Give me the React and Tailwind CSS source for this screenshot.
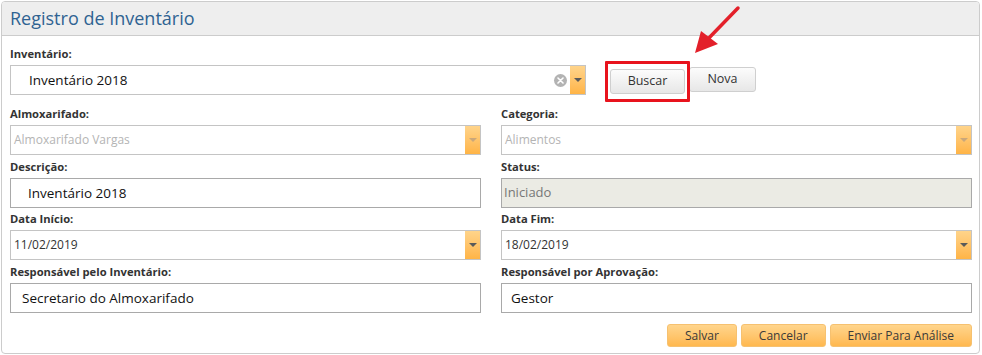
import React from 'react';

const font = { fontFamily: '"Open Sans", "Noto Sans", sans-serif' };

const DropButton = ({ disabled }) => (
  <div className="w-[15px] self-stretch bg-gradient-to-b from-[#ffd48a] to-[#ffb445] flex items-center justify-center">
    <div
      className={`w-0 h-0 border-l-[4px] border-r-[4px] border-t-[4px] border-l-transparent border-r-transparent ${
        disabled ? 'border-t-[#caa77a]' : 'border-t-[#5a5a5a]'
      }`}
    />
  </div>
);

const Combo = ({ value, disabled, big, clear, className = '' }) => (
  <div className={`h-[30px] flex border border-[#c4c4c4] bg-white ${className}`}>
    <div
      className={`flex-1 flex items-center ${
        big ? 'pl-[18px] text-[13.5px] text-[#111]' : 'pl-[3px] text-[12px]'
      } ${disabled ? 'text-[#b4b4b4]' : big ? '' : 'text-[#333]'}`}
    >
      {value}
    </div>
    {clear && (
      <div className="flex items-center pr-[3px]">
        <div className="w-[13px] h-[13px] rounded-full bg-[#b3b3b3] flex items-center justify-center">
          <svg width="7" height="7" viewBox="0 0 7 7">
            <path d="M1 1 L6 6 M6 1 L1 6" stroke="#fff" strokeWidth="1.6" strokeLinecap="round" />
          </svg>
        </div>
      </div>
    )}
    <DropButton disabled={disabled} />
  </div>
);

const TextBox = ({ value, pad = 'pl-[17px]' }) => (
  <div className={`h-[30px] flex items-center border border-[#a9a9a9] bg-white ${pad} text-[13.5px] text-[#111]`}>
    {value}
  </div>
);

const Label = ({ children }) => (
  <div className="h-[16px] mb-[3px] text-[11.2px] leading-[16px] font-bold text-[#333]">{children}</div>
);

const Field = ({ label, children }) => (
  <div>
    <Label>{label}</Label>
    {children}
  </div>
);

const GrayButton = ({ children, className = '' }) => (
  <button className={`h-[25px] rounded-[3px] border border-[#cfcfcf] bg-gradient-to-b from-[#fcfcfc] to-[#e7e7e7] text-[12.5px] text-[#333] ${className}`}>
    {children}
  </button>
);

const OrangeButton = ({ children }) => (
  <button className="h-[23px] px-[17px] rounded-[3px] border border-[#f6c170] bg-gradient-to-b from-[#ffd58c] to-[#ffb84e] text-[12px] text-[#3a3a3a]">
    {children}
  </button>
);

export default function App() {
  return (
    <div className="relative w-[982px] h-[355px] bg-white overflow-hidden" style={font}>
      <div className="ml-[1px] mt-[1px] w-[979px] h-[353px] border border-[#cccccc] rounded-[4px] overflow-hidden">
        <div className="h-[34px] bg-[#eeeeee] border-b border-[#cccccc] flex items-center pl-[8px]">
          <h1 className="text-[18px] text-[#2f6392] font-normal">Registro de Inventário</h1>
        </div>

        <div className="pl-[8px] pr-[7px] pt-[10px]">
          {/* Inventário + ações */}
          <div className="flex">
            <Field label="Inventário:">
              <Combo value="Inventário 2018" big clear className="w-[576px]" />
            </Field>
            <div className="flex gap-[4px] pt-[21px] ml-[24px]">
              <div className="relative">
                <GrayButton className="w-[75px]">Buscar</GrayButton>
                <div className="absolute -left-[5px] -right-[5px] -top-[6px] -bottom-[7px] border-[3px] border-[#e8131d] rounded-[1px]" />
              </div>
              <GrayButton className="w-[67px]">Nova</GrayButton>
            </div>
          </div>

          <div className="grid grid-cols-2 gap-x-[20px] mt-[11px]">
            <Field label="Almoxarifado:">
              <Combo value="Almoxarifado Vargas" disabled />
            </Field>
            <Field label="Categoria:">
              <Combo value="Alimentos" disabled />
            </Field>
          </div>

          <div className="grid grid-cols-2 gap-x-[20px] mt-[4px]">
            <Field label="Descrição:">
              <TextBox value="Inventário 2018" />
            </Field>
            <Field label="Status:">
              <div className="h-[30px] flex items-center border border-[#a9a9a9] bg-[#ebebe4] pl-[2px] text-[13px] text-[#777]">
                Iniciado
              </div>
            </Field>
          </div>

          <div className="grid grid-cols-2 gap-x-[20px] mt-[3px]">
            <Field label="Data Início:">
              <Combo value="11/02/2019" />
            </Field>
            <Field label="Data Fim:">
              <Combo value="18/02/2019" />
            </Field>
          </div>

          <div className="grid grid-cols-2 gap-x-[20px] mt-[4px]">
            <Field label="Responsável pelo Inventário:">
              <TextBox value="Secretario do Almoxarifado" pad="pl-[11px]" />
            </Field>
            <Field label="Responsável por Aprovação:">
              <TextBox value="Gestor" pad="pl-[9px]" />
            </Field>
          </div>

          <div className="flex justify-end gap-[4px] mt-[11px]">
            <OrangeButton>Salvar</OrangeButton>
            <OrangeButton>Cancelar</OrangeButton>
            <OrangeButton>Enviar Para Análise</OrangeButton>
          </div>
        </div>
      </div>

      {/* seta vermelha */}
      <svg className="absolute left-0 top-0 pointer-events-none" width="982" height="355">
        <line x1="738" y1="8" x2="707" y2="40" stroke="#e3202a" strokeWidth="3.5" strokeLinecap="round" />
        <polygon points="695,53 701,31 718,44" fill="#e3202a" />
      </svg>
    </div>
  );
}
